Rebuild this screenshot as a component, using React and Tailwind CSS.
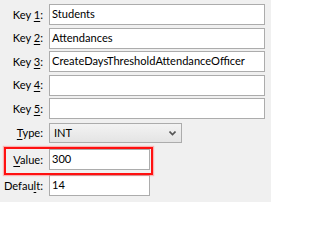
import { useState } from 'react';

const font = { fontFamily: 'Lato, "Noto Sans", sans-serif' };

function Label({ children, accel, rest }) {
  return (
    <div className="w-[44px] shrink-0 text-right pr-[1px] leading-none whitespace-nowrap">
      {children}
      <span className="underline underline-offset-2">{accel}</span>
      {rest}
    </div>
  );
}

function TextInput({ value, width = 'w-[216px]' }) {
  return (
    <div
      className={`${width} h-[21px] border border-[#acacac] bg-white px-[2px] flex items-center text-black whitespace-nowrap overflow-hidden`}
    >
      {value}
    </div>
  );
}

export default function App() {
  const [keys] = useState(['Students', 'Attendances', 'CreateDaysThresholdAttendanceOfficer', '', '']);

  return (
    <div className="w-[271px] h-[202px] bg-[#f0f0f0] text-[11.1px] text-black pt-[4px]" style={font}>
      <div className="flex flex-col gap-[2.5px]">
        {keys.map((k, i) => (
          <div key={i} className="flex items-center gap-[5px]">
            <Label accel={String(i + 1)} rest=":">Key </Label>
            <TextInput value={k} />
          </div>
        ))}
      </div>

      <div className="flex items-center gap-[5px] mt-[4px]">
        <Label accel="T" rest="ype:" />
        <div className="w-[133px] h-[20px] border border-[#acacac] bg-gradient-to-b from-[#f3f3f3] to-[#e4e4e4] flex items-center justify-between pl-[4px] pr-[5px]">
          <span>INT</span>
          <svg width="7" height="5" viewBox="0 0 7 5">
            <path d="M0.5 0.5 L3.5 3.5 L6.5 0.5" fill="none" stroke="#555" strokeWidth="1.6" />
          </svg>
        </div>
      </div>

      <div className="relative flex items-center gap-[5px] mt-[6px]">
        <span className="absolute left-[4px] top-[-2px] w-[149px] h-[28px] border-2 border-[#ff1010] shadow-[0_0_1px_1px_rgba(255,120,120,0.5)]"></span>
        <Label accel="V" rest="alue:" />
        <TextInput value="300" width="w-[101px]" />
      </div>

      <div className="flex items-center gap-[5px] mt-[5px]">
        <Label rest="" accel="">
          Defau<span className="underline underline-offset-2">l</span>t:
        </Label>
        <TextInput value="14" width="w-[101px]" />
      </div>
    </div>
  );
}
